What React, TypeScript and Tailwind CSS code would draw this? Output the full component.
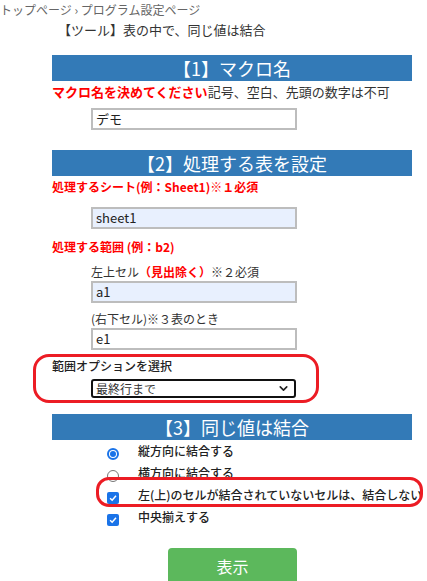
import { ChevronDown } from 'lucide-react'

const font = { fontFamily: '"Noto Sans CJK JP", "Noto Sans", sans-serif' }

function SectionBar({ children }: { children: React.ReactNode }) {
  return (
    <div className="flex h-[26px] w-[360px] items-center justify-center bg-[#337ab7] text-[18px] leading-none text-white">
      {children}
    </div>
  )
}

function TextBox({ value, filled }: { value: string; filled?: boolean }) {
  return (
    <div
      className={
        'ml-[39px] flex h-[22px] w-[206px] items-center border-2 border-[#bdbdbd] px-[3px] text-[13px] text-[#222] ' +
        (filled ? 'bg-[#e8f0fe]' : 'bg-white')
      }
    >
      {value}
    </div>
  )
}

function Option({ type, checked, label }: { type: 'radio' | 'check'; checked: boolean; label: string }) {
  return (
    <div className="flex h-[22px] items-center">
      <div className="ml-[55px] flex w-[31px] items-center pt-[6px]">
        {type === 'radio' ? (
          checked ? (
            <span className="flex h-[12px] w-[12px] items-center justify-center rounded-full border-2 border-[#1a73e8]">
              <span className="h-[6px] w-[6px] rounded-full bg-[#1a73e8]" />
            </span>
          ) : (
            <span className="h-[12px] w-[12px] rounded-full border border-[#767676] bg-white" />
          )
        ) : (
          <span className="flex h-[12px] w-[12px] items-center justify-center rounded-[2px] bg-[#1a73e8]">
            <svg viewBox="0 0 12 12" className="h-[10px] w-[10px]">
              <path d="M2.5 6.2 L5 8.6 L9.6 3.4" fill="none" stroke="white" strokeWidth="1.8" />
            </svg>
          </span>
        )}
      </div>
      <span className="text-[12px] font-medium leading-none text-[#222]">{label}</span>
    </div>
  )
}

export default function App() {
  return (
    <div className="relative h-[581px] w-[427px] overflow-hidden bg-white" style={font}>
      {/* Header */}
      <div className="pt-[2px] text-[12px] leading-[16px] text-[#666]">
        トップページ › プログラム設定ページ
      </div>
      <div className="ml-[58px] mt-[4px] text-[13px] leading-[16px] text-[#333]">【ツール】表の中で、同じ値は結合</div>

      <div className="ml-[52px] mt-[17px]">
        {/* 1 */}
        <SectionBar>【1】マクロ名</SectionBar>
        <div className="mt-[2px] text-[13px] leading-[18px] text-[#333]">
          <span className="font-bold text-[#ff0000]">マクロ名を決めてください</span>記号、空白、先頭の数字は不可
        </div>
        <div className="mt-[7px]">
          <TextBox value="デモ" />
        </div>

        {/* 2 */}
        <div className="mt-[20px]">
          <SectionBar>【2】処理する表を設定</SectionBar>
        </div>
        <div className="mt-[2px] text-[12px] font-bold leading-[18px] text-[#ff0000]">
          処理するシート(例：Sheet1)※１必須
        </div>
        <div className="mt-[11px]">
          <TextBox value="sheet1" filled />
        </div>
        <div className="mt-[9px] text-[12px] font-bold leading-[18px] text-[#ff0000]">処理する範囲 (例：b2)</div>
        <div className="ml-[39px] mt-[7px] text-[12px] leading-[18px] text-[#333]">
          左上セル<span className="font-bold text-[#ff0000]">（見出除く）</span>※２必須
        </div>
        <TextBox value="a1" filled />
        <div className="ml-[39px] mt-[7px] text-[12px] leading-[18px] text-[#333]">(右下セル)※３表のとき</div>
        <TextBox value="e1" />

        <div className="mt-[7px] text-[12px] font-medium leading-[18px] text-[#222]">範囲オプションを選択</div>
        <div className="ml-[39px] mt-[4px] flex h-[19px] w-[205px] items-center justify-between rounded-[3px] border-2 border-[#111] bg-white pl-[3px] pr-[4px] text-[12px] text-[#333]">
          <span>最終行まで</span>
          <ChevronDown size={13} strokeWidth={3} className="text-[#222]" />
        </div>

        {/* 3 */}
        <div className="mt-[16px]">
          <SectionBar>【3】同じ値は結合</SectionBar>
        </div>
        <div>
          <Option type="radio" checked label="縦方向に結合する" />
          <Option type="radio" checked={false} label="横方向に結合する" />
          <Option type="check" checked label="左(上)のセルが結合されていないセルは、結合しない" />
          <Option type="check" checked label="中央揃えする" />
        </div>

        <div className="ml-[116px] mt-[20px] flex h-[40px] w-[129px] items-start justify-center rounded-[4px] bg-[#5cb85c] pt-[10px] text-[16px] leading-none text-white">
          表示
        </div>
      </div>

      {/* annotation outlines */}
      <div className="pointer-events-none absolute left-[33px] top-[354px] h-[49px] w-[286px] rounded-[16px] border-[3px] border-[#ec1c24]" />
      <div className="pointer-events-none absolute left-[96px] top-[477px] h-[30px] w-[327px] rounded-[13px] border-[3px] border-[#ec1c24]" />
    </div>
  )
}
